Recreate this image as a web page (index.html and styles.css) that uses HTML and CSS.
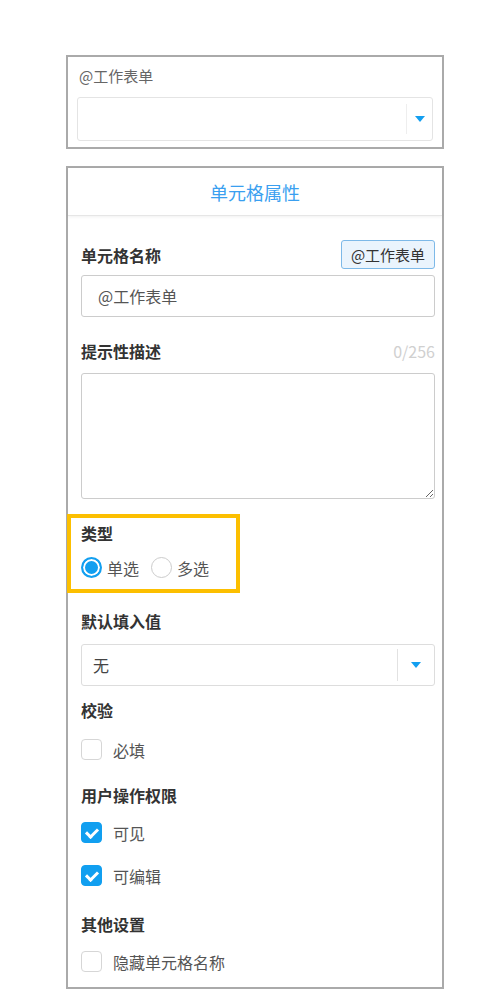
FILE: index.html
```html
<!DOCTYPE html>
<html lang="zh-CN">
<head>
    <meta charset="UTF-8">
    <title>单元格属性</title>
    <link rel="stylesheet" href="styles.css">
</head>
<body>
    <div class="wrap">
        <div class="panel widget">
            <div class="widget-label">@工作表单</div>
            <div class="select select-tall">
                <span class="select-value"></span>
                <span class="select-arrow"><i class="tri"></i></span>
            </div>
        </div>

        <div class="panel props">
            <div class="props-head">单元格属性</div>
            <div class="props-body">
                <div class="field-row first">
                    <span class="field-label">单元格名称</span>
                    <button class="tag-btn">@工作表单</button>
                </div>
                <div class="input">@工作表单</div>

                <div class="field-row desc">
                    <span class="field-label">提示性描述</span>
                    <span class="counter">0/256</span>
                </div>
                <textarea class="textarea"></textarea>

                <div class="highlight">
                    <div class="field-label">类型</div>
                    <div class="radios">
                        <label class="radio on"><i class="dot"></i>单选</label>
                        <label class="radio"><i class="dot"></i>多选</label>
                    </div>
                </div>

                <div class="field-label sec-default">默认填入值</div>
                <div class="select">
                    <span class="select-value">无</span>
                    <span class="select-arrow"><i class="tri"></i></span>
                </div>

                <div class="field-label sec">校验</div>
                <label class="check solo"><i class="box"></i>必填</label>

                <div class="field-label sec-wide">用户操作权限</div>
                <label class="check"><i class="box on"></i>可见</label>
                <label class="check next"><i class="box on"></i>可编辑</label>

                <div class="field-label sec-last">其他设置</div>
                <label class="check"><i class="box"></i>隐藏单元格名称</label>
            </div>
        </div>
    </div>
</body>
</html>
```

FILE: styles.css
```css
* {
    margin: 0;
    padding: 0;
    box-sizing: border-box;
}

body {
    background: #fff;
    font-family: "Noto Sans CJK SC", "Noto Sans", sans-serif;
    font-size: 16px;
    line-height: 20px;
    color: #555;
    padding-top: 55px;
}

.wrap {
    width: 378px;
    margin-left: 66px;
}

.panel {
    border: 2px solid #aaa;
    background: #fff;
}

/* top widget */
.widget {
    padding: 9px 9px 6px 9px;
}

.widget-label {
    font-size: 15px;
    color: #666;
    padding-left: 2px;
}

.select {
    display: flex;
    height: 42px;
    border: 1px solid #ddd;
    border-radius: 3px;
    background: #fff;
}

.select-tall {
    height: 44px;
    margin-top: 11px;
    border-color: #e4e4e4;
}

.select-value {
    flex: 1;
    display: flex;
    align-items: center;
    padding-left: 11px;
    color: #444;
}

.select-arrow {
    width: 37px;
    display: flex;
    align-items: center;
    justify-content: center;
    border-left: 1px solid #e2e2e2;
    margin: 4px 0;
}

.select-tall .select-arrow {
    width: 26px;
    margin: 6px 0;
    border-left-color: #eee;
}

.tri {
    width: 0;
    height: 0;
    border-left: 5px solid transparent;
    border-right: 5px solid transparent;
    border-top: 6px solid #139ff0;
}

/* properties panel */
.props {
    margin-top: 17px;
    height: 823px;
}

.props-head {
    height: 48px;
    display: flex;
    align-items: center;
    justify-content: center;
    font-size: 18px;
    color: #3a9ff0;
    border-bottom: 1px solid #e6e6e6;
    box-shadow: 0 1px 3px rgba(0,0,0,0.06);
}

.props-body {
    padding: 0 7px 13px 13px;
}

.field-row {
    display: flex;
    align-items: center;
    justify-content: space-between;
}

.field-row.first {
    margin-top: 24px;
    height: 29px;
}

.field-row.desc {
    margin-top: 24px;
    height: 20px;
}

.field-label {
    font-size: 16px;
    font-weight: bold;
    color: #333;
}

.tag-btn {
    height: 29px;
    width: 94px;
    font: inherit;
    font-size: 15px;
    color: #333;
    background: #eaf4fd;
    border: 1px solid #7db9e8;
    border-radius: 3px;
}

.counter {
    font-size: 16px;
    color: #d0d0d0;
}

.input {
    margin-top: 6px;
    height: 42px;
    border: 1px solid #ccc;
    border-radius: 3px;
    display: flex;
    align-items: center;
    padding-left: 16px;
    color: #555;
}

.textarea {
    display: block;
    margin-top: 12px;
    width: 100%;
    height: 126px;
    border: 1px solid #ccc;
    border-radius: 3px;
    resize: vertical;
    font: inherit;
}

.highlight {
    width: 173px;
    margin: 15px 0 0 -14px;
    border: 4px solid #fcbf00;
    padding: 5px 0 11px 10px;
}

.radios {
    display: flex;
    gap: 12px;
    margin-top: 14px;
}

.radio {
    display: flex;
    align-items: center;
    gap: 5px;
    color: #555;
}

.radio .dot {
    width: 21px;
    height: 21px;
    border: 1px solid #ccc;
    border-radius: 50%;
    background: #fff;
}

.radio.on .dot {
    border: 2px solid #129ff0;
    background: #129ff0;
    box-shadow: inset 0 0 0 2px #fff;
}

.sec-default {
    margin-top: 18px;
    margin-bottom: 13px;
}

.sec {
    margin-top: 14px;
}

.sec-wide {
    margin-top: 25px;
}

.sec-last {
    margin-top: 28px;
}

.check {
    display: flex;
    align-items: center;
    gap: 11px;
    margin-top: 17px;
    color: #555;
}

.check.solo {
    margin-top: 19px;
}

.check.next {
    margin-top: 22px;
}

.box {
    width: 21px;
    height: 21px;
    border: 1px solid #d6d6d6;
    border-radius: 4px;
    background: #fff;
    position: relative;
}

.box.on {
    background: #119ff0;
    border-color: #119ff0;
}

.box.on::after {
    content: "";
    position: absolute;
    left: 6px;
    top: 3px;
    width: 5px;
    height: 9px;
    border-right: 3px solid #fff;
    border-bottom: 3px solid #fff;
    transform: rotate(45deg);
}
```
